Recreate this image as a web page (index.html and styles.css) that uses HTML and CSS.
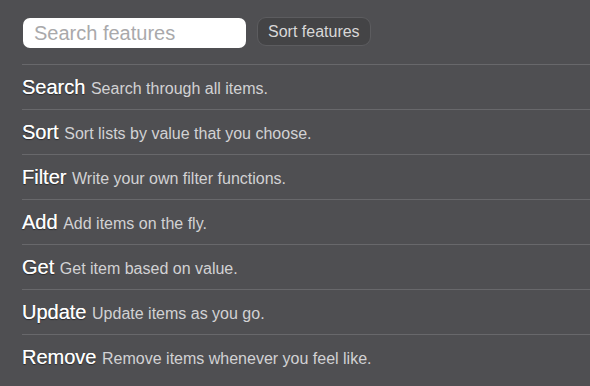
FILE: index.html
```
<!DOCTYPE html>
<html lang="en">
<head>
    <meta charset="UTF-8">
    <meta name="viewport" content="width=device-width, initial-scale=1.0">
    <title>Features</title>
    <link rel="stylesheet" href="styles.css">
</head>
<body>
    <div class="features">
        <div class="toolbar">
            <input class="search" type="text" placeholder="Search features">
            <button class="sort">Sort features</button>
        </div>
        <ul class="list">
            <li><span class="name">Search</span> <span class="desc">Search through all items.</span></li>
            <li><span class="name">Sort</span> <span class="desc">Sort lists by value that you choose.</span></li>
            <li><span class="name">Filter</span> <span class="desc">Write your own filter functions.</span></li>
            <li><span class="name">Add</span> <span class="desc">Add items on the fly.</span></li>
            <li><span class="name">Get</span> <span class="desc">Get item based on value.</span></li>
            <li><span class="name">Update</span> <span class="desc">Update items as you go.</span></li>
            <li><span class="name">Remove</span> <span class="desc">Remove items whenever you feel like.</span></li>
        </ul>
    </div>
</body>
</html>
```
FILE: styles.css
```
body {
    margin: 0;
    padding: 0;
    background-color: #4f4f52;
    font-family: "Liberation Sans", Arial, sans-serif;
}
.features {
    padding: 17px 0 0 22px;
}
.toolbar {
    display: flex;
    align-items: flex-start;
    gap: 11px;
    height: 47px;
}
.search {
    box-sizing: border-box;
    width: 223px;
    height: 30px;
    margin: 1px 0 0 1px;
    padding: 0 11px;
    border: none;
    border-radius: 7px;
    background-color: #fff;
    font-family: inherit;
    font-size: 20px;
    color: #333;
    outline: none;
}
.search::placeholder {
    color: #a9a9ab;
}
.sort {
    box-sizing: border-box;
    height: 29px;
    padding: 1px 10px 0;
    border: 1px solid #5c5c5f;
    border-radius: 9px;
    background-color: #444446;
    color: #d8d8d8;
    font-family: inherit;
    font-size: 16px;
    cursor: pointer;
}
.list {
    list-style: none;
    margin: 0;
    padding: 0;
}
.list li {
    height: 44px;
    border-top: 1px solid #68686b;
    font-size: 20px;
    line-height: 44px;
    white-space: nowrap;
}
.name {
    color: #fff;
    text-shadow: 0 1px 1px rgba(0, 0, 0, 0.5), 0 0 0.4px #fff;
}
.desc {
    font-size: 16px;
    line-height: 1;
    color: #d2d2d4;
}
```
